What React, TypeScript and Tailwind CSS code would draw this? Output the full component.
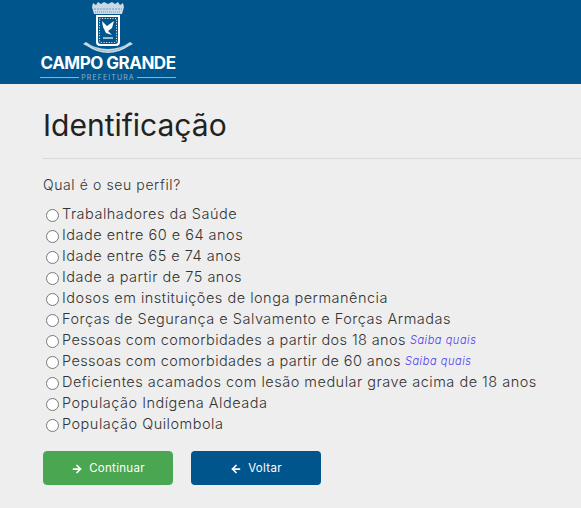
import React from 'react';
import { ArrowLeft, ArrowRight } from 'lucide-react';

const perfis = [
  { label: 'Trabalhadores da Saúde' },
  { label: 'Idade entre 60 e 64 anos' },
  { label: 'Idade entre 65 e 74 anos' },
  { label: 'Idade a partir de 75 anos' },
  { label: 'Idosos em instituições de longa permanência' },
  { label: 'Forças de Segurança e Salvamento e Forças Armadas' },
  { label: 'Pessoas com comorbidades a partir dos 18 anos', saiba: true },
  { label: 'Pessoas com comorbidades a partir de 60 anos', saiba: true },
  { label: 'Deficientes acamados com lesão medular grave acima de 18 anos' },
  { label: 'População Indígena Aldeada' },
  { label: 'População Quilombola' },
];

const Brasao = () => (
  <svg width="50" height="53" viewBox="0 0 50 53" className="block">
    {/* coroa */}
    <path d="M9 7 L10 3 L13 5 L15 2 L18 4 L21 2 L25 4 L29 2 L32 4 L35 2 L37 5 L40 3 L41 7 L39 14 L11 14 Z" fill="#c9d9e5" />
    <path d="M11 9 H39" stroke="#5b8db0" strokeWidth="0.8" strokeDasharray="2 1" />
    <path d="M12 12 H38" stroke="#5b8db0" strokeWidth="0.8" strokeDasharray="1 1" />
    {/* escudo */}
    <path d="M13 15 H37 V42 Q37 46 33 46 H17 Q13 46 13 42 Z" fill="#fff" />
    <path d="M15 17 H35 V41 Q35 44 32 44 H18 Q15 44 15 41 Z" fill="#00558c" />
    <path d="M16.5 18.5 H33.5 V40.5 Q33.5 42.5 31 42.5 H19 Q16.5 42.5 16.5 40.5 Z" fill="none" stroke="#fff" strokeWidth="1" strokeDasharray="1 1.6" />
    <path d="M19 21 L24 26 L31 21 L29 28 L25 31 L29 35 L23 33 L20 27 Z" fill="#fff" />
    <path d="M20 38 H30" stroke="#fff" strokeWidth="1.2" />
    {/* faixa */}
    <path d="M0 44 L3 42 Q12 49 25 49 Q38 49 47 42 L50 44 L46 46 Q36 53 25 53 Q14 53 4 46 Z" fill="#c9d9e5" />
    <path d="M7 45 Q15 51 25 51 Q35 51 43 45" fill="none" stroke="#5b8db0" strokeWidth="0.7" strokeDasharray="1.5 1" />
  </svg>
);

export default function App() {
  return (
    <div className="min-h-[508px] bg-[#eeeeee] text-[#333] font-['Inter','Liberation_Sans',sans-serif]">
      <header className="h-[84px] bg-[#00558c] pl-10">
        <div className="flex w-[136px] flex-col items-center">
          <Brasao />
          <div className="mt-[1px] text-[17px] font-bold leading-[19px] tracking-[-0.5px] whitespace-nowrap text-white">CAMPO GRANDE</div>
          <div className="flex w-full items-center gap-[2px]">
            <span className="h-[1px] flex-1 bg-[#8fb3cc]" />
            <span className="text-[7px] leading-[9px] tracking-[1.1px] text-[#8fb3cc]">PREFEITURA</span>
            <span className="h-[1px] flex-1 bg-[#8fb3cc]" />
          </div>
        </div>
      </header>

      <main className="pt-[21px] pl-[43px]">
        <h1 className="text-[30px] leading-[40px] font-normal text-[#222]">Identificação</h1>
        <hr className="mt-[13px] border-[#d9d9d9]" />

        <p className="mt-[16px] text-[14px] leading-[20px] tracking-[0.6px] font-light text-[#333]">Qual é o seu perfil?</p>

        <div className="mt-[8px] flex flex-col pl-[3px]">
          {perfis.map((p) => (
            <label key={p.label} className="flex h-[21px] items-center whitespace-nowrap text-[14.5px] font-light text-[#333]">
              <input type="radio" name="perfil" className="mt-[3px] mr-[3px] h-[13px] w-[13px]" />
              <span className={p.saiba ? 'tracking-[0.39px]' : 'tracking-[0.5px]'}>{p.label}</span>
              {p.saiba && <a className="mt-[2px] ml-[4px] text-[11px] tracking-[0.55px] text-[#4a3cf0] italic">Saiba quais</a>}
            </label>
          ))}
        </div>

        <div className="mt-[17px] flex gap-[18px]">
          <button className="flex h-[34px] w-[130px] items-center justify-center gap-[6px] rounded-[4px] border border-[#43a84f] bg-[#4ba651] pt-[1px] text-[11.5px] tracking-[0.3px] text-white">
            <ArrowRight size={12} strokeWidth={3.5} />
            Continuar
          </button>
          <button className="flex h-[34px] w-[130px] items-center justify-center gap-[6px] rounded-[4px] bg-[#00558c] pt-[1px] text-[11.5px] tracking-[0.3px] text-white">
            <ArrowLeft size={12} strokeWidth={3.5} />
            Voltar
          </button>
        </div>
      </main>
    </div>
  );
}
